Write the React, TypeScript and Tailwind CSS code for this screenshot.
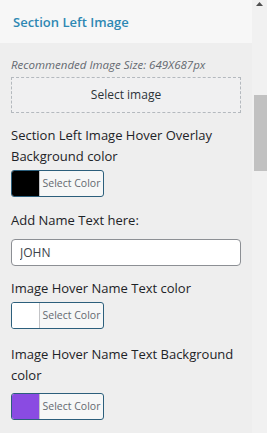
import React from 'react';

const font = { fontFamily: '"Open Sans", "Noto Sans", sans-serif' };

function ColorButton({ swatch }: { swatch: string }) {
  return (
    <button className="flex h-[27px] w-[93px] overflow-hidden rounded-[3px] border border-[#2c5f7c] bg-[#f6f7f7] p-0">
      <span className={`h-full w-[28px] border-r border-[#c3c4c7] ${swatch}`} />
      <span className="flex flex-1 items-center justify-center text-[10.5px] text-[#646970]">Select Color</span>
    </button>
  );
}

function Label({ children }: { children: React.ReactNode }) {
  return <div className="text-[13px] leading-[21px] text-[#1d2327]">{children}</div>;
}

export default function App() {
  return (
    <div className="flex h-[433px] w-[267px] overflow-hidden bg-[#eeeeee]" style={font}>
      <div className="flex w-[252px] flex-col">
        {/* Section header */}
        <div className="flex h-[43px] items-center bg-[#f7f7f7] pl-[13px] pt-[3px] text-[13px] font-semibold text-[#2e88b3]">
          Section Left Image
        </div>

        <div className="flex flex-col px-[11px]">
          <div className="mt-[12px] text-[11.5px] italic leading-[20px] text-[#646970]">
            Recommended Image Size: 649X687px
          </div>
          <div className="mt-[2px] flex h-[36px] w-[230px] items-center justify-center border border-dashed border-[#b4b9be] bg-[#f0f0f1] text-[12px] text-[#2c3338]">
            Select image
          </div>

          <div className="mt-[12px]">
            <Label>Section Left Image Hover Overlay</Label>
            <Label>Background color</Label>
          </div>
          <div className="mt-[3px]">
            <ColorButton swatch="bg-black" />
          </div>

          <div className="mt-[13px]">
            <Label>Add Name Text here:</Label>
          </div>
          <input
            readOnly
            value="JOHN"
            className="mt-[8px] h-[27px] w-[230px] rounded-[4px] border border-[#8c8f94] bg-white px-[8px] text-[12px] text-[#3c434a] outline-none"
            style={font}
          />

          <div className="mt-[12px]">
            <Label>Image Hover Name Text color</Label>
          </div>
          <div className="mt-[3px]">
            <ColorButton swatch="bg-white" />
          </div>

          <div className="mt-[15px]">
            <Label>Image Hover Name Text Background</Label>
            <Label>color</Label>
          </div>
          <div className="mt-[7px]">
            <ColorButton swatch="bg-[#8a4be2]" />
          </div>
        </div>
      </div>

      {/* Scrollbar */}
      <div className="flex w-[15px] flex-col items-end bg-[#f1f1f1]">
        <div className="flex h-[10px] w-full justify-center pt-[2px]">
          <svg width="7" height="4" viewBox="0 0 7 4">
            <path d="M0 4 L3.5 0 L7 4 Z" fill="#505050" />
          </svg>
        </div>
        <div className="mt-[85px] h-[76px] w-[13px] bg-[#c1c1c1]" />
      </div>
    </div>
  );
}
